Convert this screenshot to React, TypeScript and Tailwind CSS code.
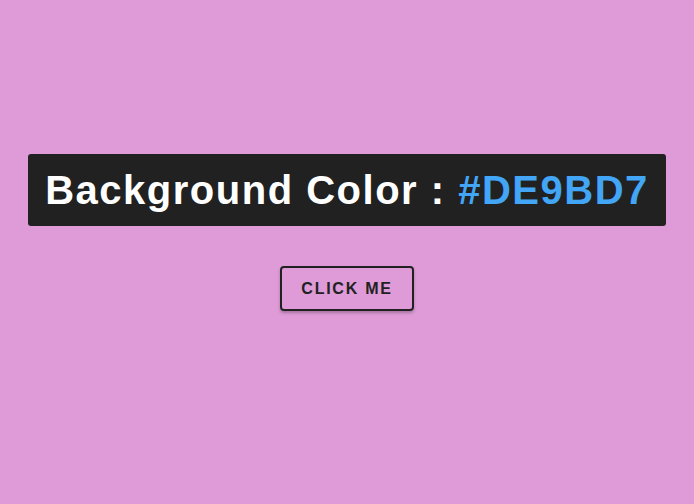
import React, { useState } from "react";

const colors = ["#DE9BD7", "#9BD7DE", "#D7DE9B", "#9BDEA8"];

const App = () => {
  const [index, setIndex] = useState(0);
  const color = colors[index];

  return (
    <div
      className="min-h-screen w-full flex flex-col items-center pt-[154px] font-['Liberation_Sans',Arial,sans-serif]"
      style={{ backgroundColor: color }}
    >
      <h1 className="bg-[#212121] rounded-[3px] px-[17px] py-[12px] text-[40px] leading-[48px] font-bold tracking-[1.5px] text-white">
        Background Color : <span className="text-[#42A5F5]">{color}</span>
      </h1>
      <button
        onClick={() => setIndex((index + 1) % colors.length)}
        className="mt-[40px] w-[134px] h-[45px] border-2 border-[#212121] rounded-[4px] text-[16px] font-bold tracking-[1.75px] text-[#212121] shadow-[0_2px_3px_rgba(0,0,0,0.25)]"
      >
        CLICK ME
      </button>
    </div>
  );
};

export default App;
